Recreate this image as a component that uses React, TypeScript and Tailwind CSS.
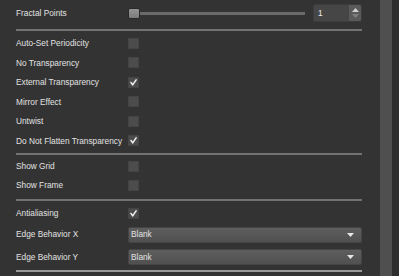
import React from 'react'

const Check = () => (
  <svg width="11" height="11" viewBox="0 0 11 11" className="block">
    <path d="M2.4 5.4 L4.5 8.5 L8.7 2.3" fill="none" stroke="#f4f4f4" strokeWidth="1.8" strokeLinecap="round" strokeLinejoin="round" />
  </svg>
)

const Box = ({ on }: { on?: boolean }) => (
  <div className="w-[11px] h-[11px] bg-[#4c4c4c] border border-[#444444] flex items-center justify-center">
    {on && <Check />}
  </div>
)

const Sep = ({ mt, light }: { mt: string; light?: boolean }) => (
  <div className={`${mt} w-[346px] h-[2px] ${light ? 'bg-[#9a9a9a]' : 'bg-[#727272]'}`} />
)

const CheckRow = ({ label, on, h }: { label: string; on?: boolean; h: string }) => (
  <div className={`flex items-center ${h}`}>
    <span className="w-[112px] whitespace-nowrap">{label}</span>
    <Box on={on} />
  </div>
)

const Drop = ({ label }: { label: string }) => (
  <div className="flex items-center h-full">
    <span className="w-[112px] whitespace-nowrap">{label}</span>
    <div className="w-[234px] h-[16px] rounded-[2px] bg-gradient-to-b from-[#5e5e5e] to-[#505050] border border-[#454545] flex items-center justify-between pl-[2px] pr-[7px]">
      <span>Blank</span>
      <svg width="7" height="4" viewBox="0 0 7 4"><path d="M0 0 H7 L3.5 4 Z" fill="#e6e6e6" /></svg>
    </div>
  </div>
)

export default function App() {
  return (
    <div className="w-[399px] h-[276px] bg-[#333333] flex overflow-hidden text-[#e2e2e2] text-[8.3px]" style={{ fontFamily: '"Liberation Sans", Arial, sans-serif' }}>
      <div className="w-[380px] pl-[16px] flex flex-col">
        <div className="flex items-center h-[26px]">
          <span className="w-[112px] whitespace-nowrap">Fractal Points</span>
          <div className="flex items-center w-[177px]">
            <div className="w-[12px] h-[11px] rounded-[2px] bg-gradient-to-b from-[#959595] to-[#7c7c7c] border border-[#2a2a2a]" />
            <div className="w-[165px] h-[3px] bg-[#6a6a6a]" />
          </div>
          <div className="ml-[8px] w-[49px] h-[18px] rounded-[2px] bg-[#464646] border border-[#3c3c3c] flex">
            <span className="flex-1 pl-[4px] flex items-center text-[#f0f0f0]">1</span>
            <div className="w-[12px] h-full bg-[#5a5a5a] rounded-r-[2px] flex flex-col items-center justify-center gap-[2px]">
              <svg width="7" height="4" viewBox="0 0 7 4"><path d="M0 4 L3.5 0 L7 4 Z" fill="#cfcfcf" /></svg>
              <svg width="7" height="4" viewBox="0 0 7 4"><path d="M0 0 H7 L3.5 4 Z" fill="#7e7e7e" /></svg>
            </div>
          </div>
        </div>
        <Sep mt="mt-[3px]" />

        <div className="mt-[2.5px] flex flex-col">
          <CheckRow h="h-[19.5px]" label="Auto-Set Periodicity" />
          <CheckRow h="h-[19.5px]" label="No Transparency" />
          <CheckRow h="h-[19.5px]" label="External Transparency" on />
          <CheckRow h="h-[19.5px]" label="Mirror Effect" />
          <CheckRow h="h-[19.5px]" label="Untwist" />
          <CheckRow h="h-[19.5px]" label="Do Not Flatten Transparency" on />
        </div>
        <Sep mt="mt-[2.5px]" />

        <div className="mt-[2px] flex flex-col">
          <CheckRow h="h-[19px]" label="Show Grid" />
          <CheckRow h="h-[19px]" label="Show Frame" />
        </div>
        <Sep mt="mt-[4px]" />

        <div className="mt-[2px] flex flex-col">
          <CheckRow h="h-[20px]" label="Antialiasing" on />
          <div className="h-[23px]"><Drop label="Edge Behavior X" /></div>
          <div className="h-[22px]"><Drop label="Edge Behavior Y" /></div>
        </div>
        <Sep mt="mt-[2px]" light />
      </div>
      <div className="w-[12px] h-full bg-[#4f4f4f]" />
      <div className="flex-1 h-full bg-[#2e2e2e]" />
    </div>
  )
}
